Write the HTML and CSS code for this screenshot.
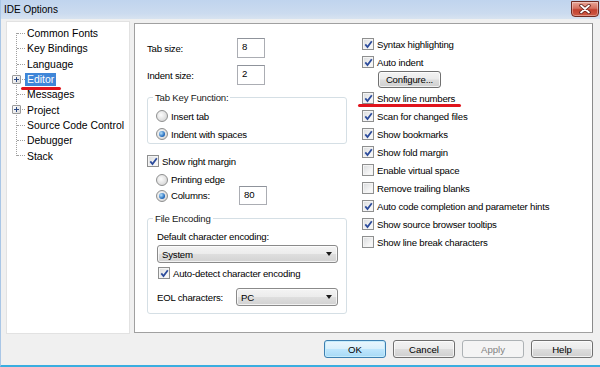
FILE: index.html
```html
<!DOCTYPE html>
<html lang="en">
  <head>
    <meta charset="UTF-8" />
    <title>IDE Options</title>
    <link rel="stylesheet" href="styles.css">
  </head>
  <body>
    <div class="window">
      <div class="titlebar">
        <span class="title">IDE Options</span>
        <span class="close">
          <svg width="12" height="10" viewBox="0 0 12 10">
            <path d="M2 1.5 L10 8.5 M10 1.5 L2 8.5" stroke="#5a1a14" stroke-width="3.4" stroke-linecap="round" />
            <path d="M2 1.5 L10 8.5 M10 1.5 L2 8.5" stroke="#ffffff" stroke-width="1.8" stroke-linecap="round" />
          </svg>
        </span>
      </div>

      <div class="main">
        <!-- category tree -->
        <div class="tree">
          <ul>
            <li><span class="label">Common Fonts</span></li>
            <li><span class="label">Key Bindings</span></li>
            <li><span class="label">Language</span></li>
            <li class="parent">
              <span class="expander"></span>
              <span class="label selected">Editor</span>
              <span class="mark"></span>
            </li>
            <li><span class="label">Messages</span></li>
            <li class="parent">
              <span class="expander"></span>
              <span class="label">Project</span>
            </li>
            <li><span class="label">Source Code Control</span></li>
            <li><span class="label">Debugger</span></li>
            <li><span class="label">Stack</span></li>
          </ul>
        </div>

        <!-- editor page -->
        <div class="page">
          <div class="col-left">
            <div class="field-row">
              <span class="field-label">Tab size:</span>
              <span class="field">8</span>
            </div>
            <div class="field-row">
              <span class="field-label">Indent size:</span>
              <span class="field">2</span>
            </div>

            <fieldset class="group">
              <legend>Tab Key Function:</legend>
              <div class="opt"><span class="radio"></span>Insert tab</div>
              <div class="opt"><span class="radio on"></span>Indent with spaces</div>
            </fieldset>

            <div class="opt margin-toggle">
              <span class="check on"><svg width="9" height="9" viewBox="0 0 9 9"><path d="M1.3 4.4 L3.5 7 L7.8 1.3" /></svg></span>Show right margin
            </div>
            <div class="sub">
              <div class="opt printing"><span class="radio"></span>Printing edge</div>
              <div class="opt columns">
                <span class="radio on"></span><span class="columns-label">Columns:</span>
                <span class="field">80</span>
              </div>
            </div>

            <fieldset class="group encoding">
              <legend>File Encoding</legend>
              <div class="enc-label">Default character encoding:</div>
              <div class="combo wide">System<span class="arrow"></span></div>
              <div class="opt detect">
                <span class="check on"><svg width="9" height="9" viewBox="0 0 9 9"><path d="M1.3 4.4 L3.5 7 L7.8 1.3" /></svg></span>Auto-detect character encoding
              </div>
              <div class="eol-row">
                <span class="eol-label">EOL characters:</span>
                <div class="combo narrow">PC<span class="arrow"></span></div>
              </div>
            </fieldset>
          </div>

          <div class="col-right">
            <div class="opt"><span class="check on"><svg width="9" height="9" viewBox="0 0 9 9"><path d="M1.3 4.4 L3.5 7 L7.8 1.3" /></svg></span>Syntax highlighting</div>
            <div class="opt"><span class="check on"><svg width="9" height="9" viewBox="0 0 9 9"><path d="M1.3 4.4 L3.5 7 L7.8 1.3" /></svg></span>Auto indent</div>
            <div class="btn configure">Configure...</div>
            <div class="opt highlighted">
              <span class="check on"><svg width="9" height="9" viewBox="0 0 9 9"><path d="M1.3 4.4 L3.5 7 L7.8 1.3" /></svg></span>Show line numbers
              <span class="underline"></span>
            </div>
            <div class="opt"><span class="check on"><svg width="9" height="9" viewBox="0 0 9 9"><path d="M1.3 4.4 L3.5 7 L7.8 1.3" /></svg></span>Scan for changed files</div>
            <div class="opt"><span class="check on"><svg width="9" height="9" viewBox="0 0 9 9"><path d="M1.3 4.4 L3.5 7 L7.8 1.3" /></svg></span>Show bookmarks</div>
            <div class="opt"><span class="check on"><svg width="9" height="9" viewBox="0 0 9 9"><path d="M1.3 4.4 L3.5 7 L7.8 1.3" /></svg></span>Show fold margin</div>
            <div class="opt"><span class="check"></span>Enable virtual space</div>
            <div class="opt"><span class="check"></span>Remove trailing blanks</div>
            <div class="opt"><span class="check on"><svg width="9" height="9" viewBox="0 0 9 9"><path d="M1.3 4.4 L3.5 7 L7.8 1.3" /></svg></span>Auto code completion and parameter hints</div>
            <div class="opt"><span class="check on"><svg width="9" height="9" viewBox="0 0 9 9"><path d="M1.3 4.4 L3.5 7 L7.8 1.3" /></svg></span>Show source browser tooltips</div>
            <div class="opt"><span class="check"></span>Show line break characters</div>
          </div>
        </div>
      </div>

      <div class="footer">
        <div class="btn default">OK</div>
        <div class="btn">Cancel</div>
        <div class="btn disabled">Apply</div>
        <div class="btn">Help</div>
      </div>
    </div>
  </body>
</html>
```
FILE: styles.css
```css
* {
  margin: 0;
  padding: 0;
  box-sizing: border-box;
}
body {
  width: 600px;
  height: 367px;
  overflow: hidden;
  font-family: "Liberation Sans", Arial, sans-serif;
  font-size: 9.6px;
  color: #000;
  background: #f0f0f0;
}
.window {
  height: 367px;
  display: flex;
  flex-direction: column;
  background: #f0f0f0;
  border-left: 1px solid #a9c6e6;
  border-bottom: 2px solid #3aaee0;
}

/* title bar */
.titlebar {
  height: 19px;
  flex: none;
  display: flex;
  align-items: center;
  justify-content: space-between;
  padding: 0 1px 0 3px;
  background: linear-gradient(#c0d4ee, #cbdbef 70%, #d8e3f0);
}
.title {
  font-size: 10px;
  color: #000;
}
.close {
  width: 28px;
  height: 16px;
  margin-top: -2px;
  display: flex;
  align-items: center;
  justify-content: center;
  border: 1px solid #6e2b22;
  border-radius: 0 0 4px 4px;
  background: linear-gradient(#e9a697, #d4705f 45%, #c2412f 55%, #cf5b45);
  box-shadow: inset 0 0 0 1px rgba(255, 255, 255, 0.35);
}

/* panes */
.main {
  display: flex;
  padding: 2px 7px 0 5px;
}
.tree {
  width: 124px;
  height: 313px;
  background: #fff;
  border: 1px solid #e2e2e2;
  padding-top: 4px;
}
.tree ul {
  list-style: none;
  position: relative;
  margin-left: 9px;
}
/* dotted trunk line */
.tree ul::before {
  content: "";
  position: absolute;
  left: 0;
  top: 7px;
  bottom: 8px;
  border-left: 1px dotted #a0a0a0;
}
.tree li {
  position: relative;
  height: 15.3px;
  display: flex;
  align-items: center;
  padding-left: 9px;
}
.tree li::before {
  content: "";
  position: absolute;
  left: 1px;
  top: 7px;
  width: 8px;
  border-top: 1px dotted #a0a0a0;
}
.tree .label {
  padding: 1px 2px;
  font-size: 10.4px;
  white-space: nowrap;
}
.tree .label.selected {
  background: #3f86d8;
  color: #fff;
}
.tree .expander {
  position: absolute;
  left: -4px;
  top: 3px;
  width: 9px;
  height: 9px;
  border: 1px solid #9a9a9a;
  border-radius: 1px;
  background: linear-gradient(135deg, #fff, #dcdcdc) ;
  z-index: 1;
}
.tree .expander::before,
.tree .expander::after {
  content: "";
  position: absolute;
  background: #2c4a84;
}
.tree .expander::before {
  left: 1px;
  top: 3px;
  width: 5px;
  height: 1px;
}
.tree .expander::after {
  left: 3px;
  top: 1px;
  width: 1px;
  height: 5px;
}
.tree .mark {
  position: absolute;
  left: 5px;
  top: 15px;
  width: 40px;
  height: 3px;
  border-radius: 2px;
  background: #e0141c;
}

.page {
  width: 459px;
  height: 310px;
  margin: 2px 0 0 4px;
  background: #fff;
  border: 1px solid #a0a0a0;
  border-right-color: #8a8a8a;
  display: flex;
  padding: 14px 0 0 12px;
  letter-spacing: -0.2px;
}
.col-left {
  width: 200px;
}
.col-right {
  margin: -3px 0 0 15px;
}

/* text fields */
.field-row {
  display: flex;
  align-items: center;
  height: 20px;
  margin-bottom: 7px;
}
.field-label {
  width: 90px;
}
.field {
  width: 28px;
  height: 20px;
  padding: 2px 0 0 4px;
  background: #fff;
  border: 1px solid #abadb3;
  border-top-color: #8f939b;
}

/* group boxes */
.group {
  border: 1px solid #d5dfe5;
  border-radius: 3px;
  padding: 0 8px 0 8px;
  margin-top: 1px;
}
.group legend {
  line-height: 11px;
  padding: 0 2px;
  margin-left: -3px;
  color: #1a1a1a;
}
.group .opt:first-of-type {
  margin-top: 4px;
}

/* option rows */
.opt {
  position: relative;
  display: flex;
  align-items: center;
  gap: 3px;
  height: 18px;
  white-space: nowrap;
}
.radio {
  width: 12px;
  height: 12px;
  flex: none;
  border-radius: 50%;
  border: 1px solid #8e8f8f;
  background: radial-gradient(circle at 40% 40%, #fdfdfd, #d6d6d6 80%);
  display: flex;
  align-items: center;
  justify-content: center;
}
.radio.on::after {
  content: "";
  width: 6px;
  height: 6px;
  border-radius: 50%;
  background: radial-gradient(circle at 35% 35%, #b9e2fb, #2b74c3 60%, #0c3f86);
}
.check {
  width: 12px;
  height: 12px;
  flex: none;
  border: 1px solid #8e8f8f;
  background: linear-gradient(135deg, #d8dadc, #f6f6f6 70%);
  box-shadow: inset 0 0 0 1px #f4f4f4;
  display: flex;
  align-items: center;
  justify-content: center;
}
.check path {
  fill: none;
  stroke: #2c4c9c;
  stroke-width: 1.8;
}

.margin-toggle {
  margin-top: 8px;
}
.sub {
  padding-left: 9px;
}
.printing {
  height: 17px;
  margin-top: 1px;
}
.columns {
  height: 19px;
  margin-top: -2px;
}
.columns-label {
  width: 65px;
}
.columns .field {
  height: 19px;
}

.encoding {
  margin-top: 8px;
  padding-bottom: 7px;
}
.enc-label {
  margin: 7px 0 0 1px;
  line-height: 12px;
}
.detect {
  margin-left: 2px;
}
.group .detect {
  margin-top: 1px;
}
.eol-row {
  display: flex;
  align-items: center;
  margin-top: 6px;
  padding-left: 1px;
}
.eol-label {
  width: 79px;
}

/* drop-down boxes */
.combo {
  height: 18px;
  display: flex;
  align-items: center;
  justify-content: space-between;
  padding: 0 5px 0 4px;
  border: 1px solid #8a8a8a;
  border-radius: 3px;
  background: linear-gradient(#f4f4f4, #ececec 48%, #dedede 52%, #d2d2d2);
  box-shadow: inset 0 0 0 1px rgba(255, 255, 255, 0.7);
}
.combo.wide {
  width: 181px;
  margin: 2px 0 0 1px;
}
.combo.narrow {
  width: 102px;
}
.arrow {
  width: 0;
  height: 0;
  border-left: 3.5px solid transparent;
  border-right: 3.5px solid transparent;
  border-top: 4px solid #1a1a1a;
}

/* push buttons */
.btn {
  width: 62px;
  height: 18px;
  display: flex;
  align-items: center;
  justify-content: center;
  border: 1px solid #707070;
  border-radius: 3px;
  background: linear-gradient(#f3f3f3, #ebebeb 48%, #dddddd 52%, #cfcfcf);
  box-shadow: inset 0 0 0 1px rgba(255, 255, 255, 0.7);
}
.btn.default {
  border-color: #3c7fb1;
  background: linear-gradient(#eaf6fd, #d9f0fc 48%, #bee6fd 52%, #a7d9f5);
  box-shadow: inset 0 0 0 1px #c5ecfc;
}
.btn.disabled {
  border-color: #adb2b5;
  background: #f4f4f4;
  box-shadow: none;
  color: #838383;
}
.configure {
  width: 63px;
  height: 17px;
  margin: 0 0 1px 16px;
}

.highlighted .underline {
  position: absolute;
  left: -4px;
  top: 15px;
  width: 103px;
  height: 3px;
  border-radius: 2px;
  background: #e0141c;
}

.footer {
  display: flex;
  justify-content: flex-end;
  gap: 7px;
  padding-right: 7px;
  margin-top: 6px;
}
```
